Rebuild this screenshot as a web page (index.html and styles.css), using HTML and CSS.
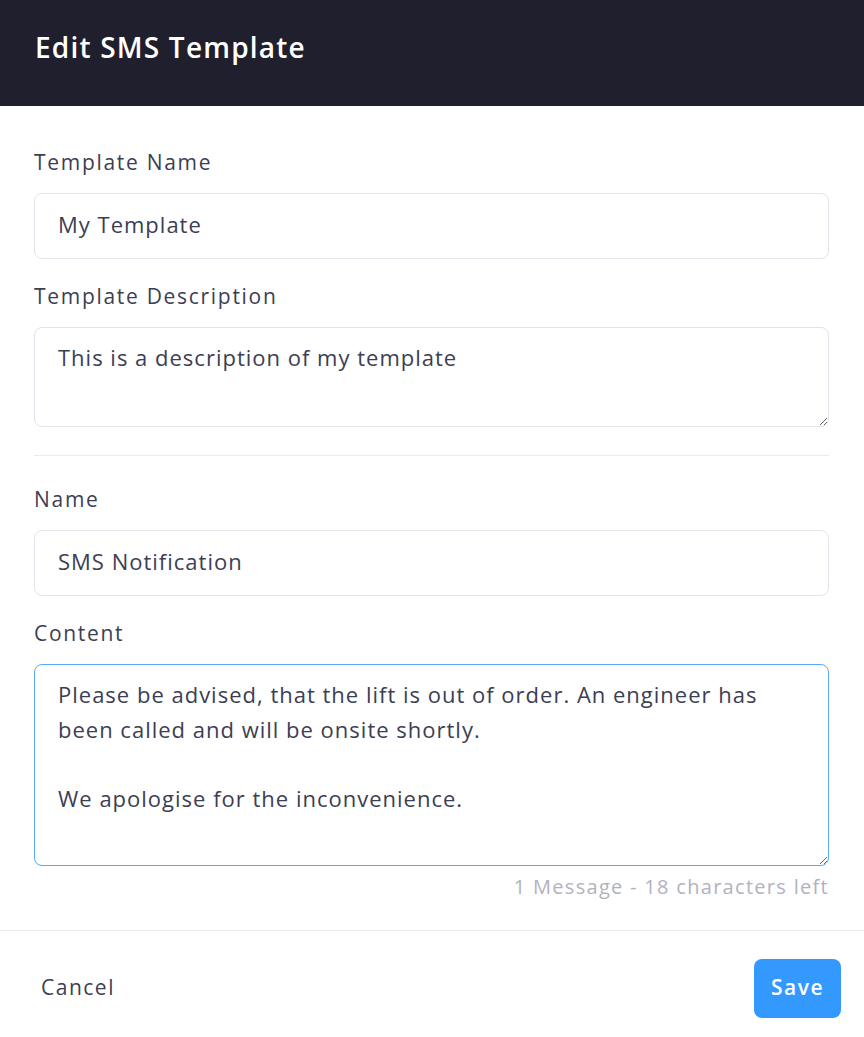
FILE: index.html
```html
<!DOCTYPE html>
<html lang="en">
<head>
<meta charset="utf-8">
<title>Edit SMS Template</title>
<link rel="stylesheet" href="styles.css">
</head>
<body>
<div class="modal">
  <header class="modal-header">
    <h1 class="modal-title">Edit SMS Template</h1>
  </header>
  <div class="modal-body">
    <div class="field">
      <label class="field-label" for="tname">Template Name</label>
      <input class="field-input" id="tname" type="text" value="My Template">
    </div>
    <div class="field">
      <label class="field-label" for="tdesc">Template Description</label>
      <textarea class="field-input field-textarea desc" id="tdesc">This is a description of my template</textarea>
    </div>
    <hr class="divider">
    <div class="field">
      <label class="field-label" for="sname">Name</label>
      <input class="field-input" id="sname" type="text" value="SMS Notification">
    </div>
    <div class="field field-last">
      <label class="field-label" for="content">Content</label>
      <textarea class="field-input field-textarea content is-active" id="content">Please be advised, that the lift is out of order. An engineer has been called and will be onsite shortly.

We apologise for the inconvenience.</textarea>
      <div class="counter">1 Message - 18 characters left</div>
    </div>
  </div>
  <footer class="modal-footer">
    <button class="btn btn-link" type="button">Cancel</button>
    <button class="btn btn-primary" type="button">Save</button>
  </footer>
</div>
<script src="script.js"></script>
</body>
</html>
```

FILE: styles.css
```css
* { box-sizing: border-box; }
html, body { margin: 0; padding: 0; background: #ffffff; }
body {
  font-family: "Open Sans", "Lato", sans-serif;
  color: #3c3e54;
}
.modal { width: 864px; }
.modal-header {
  background: #1f1f2e;
  height: 106px;
  display: flex;
  align-items: center;
  padding: 0 35px 12px;
}
.modal-title {
  margin: 0;
  color: #ffffff;
  font-size: 28px;
  font-weight: 600;
  line-height: 36px;
  letter-spacing: 1.2px;
}
.modal-body {
  padding: 42px 35px 0 34px;
}
.field { display: flex; flex-direction: column; margin-bottom: 23px; }
.field-label {
  font-size: 21px;
  line-height: 28px;
  margin-bottom: 17px;
  letter-spacing: 1.7px;
  color: #3c3e54;
}
.field-input {
  width: 100%;
  height: 66px;
  border: 1px solid #e3e3eb;
  border-radius: 8px;
  padding: 0 23px 4px;
  font-family: inherit;
  font-size: 22px;
  letter-spacing: 1px;
  color: #3c3e54;
  background: #fff;
  outline: none;
}
.field-textarea {
  padding: 12px 23px;
  line-height: 34.5px;
  resize: vertical;
  display: block;
}
.field-textarea.desc { height: 100px; }
.field-textarea.content { height: 202px; }
.field-input.is-active { border-color: #5aa9f5; }
.field-last { margin-bottom: 0; }
.counter {
  text-align: right;
  font-size: 20px;
  line-height: 28px;
  margin-top: 7px;
  letter-spacing: 1.3px;
  color: #b2b1c2;
}
.divider {
  border: 0;
  border-top: 1px solid #ebebef;
  margin: 28px 0 29px;
}
.modal-footer {
  margin-top: 29px;
  border-top: 1px solid #ebebef;
  padding: 28px 23px 0 26px;
  display: flex;
  justify-content: space-between;
  align-items: center;
}
.btn {
  font-family: inherit;
  font-size: 21px;
  letter-spacing: 1.5px;
  border: 0;
  cursor: pointer;
}
.btn-link {
  background: transparent;
  color: #3c3e54;
  padding: 0 15px 4px;
}
.btn-primary {
  background: #3399ff;
  color: #fff;
  font-weight: 600;
  height: 59px;
  width: 87px;
  border-radius: 8px;
  padding: 0 0 3px;
}
```

FILE: script.js
```js
var t = document.getElementById('content');
t.focus();
t.setSelectionRange(t.value.length, t.value.length);
```
